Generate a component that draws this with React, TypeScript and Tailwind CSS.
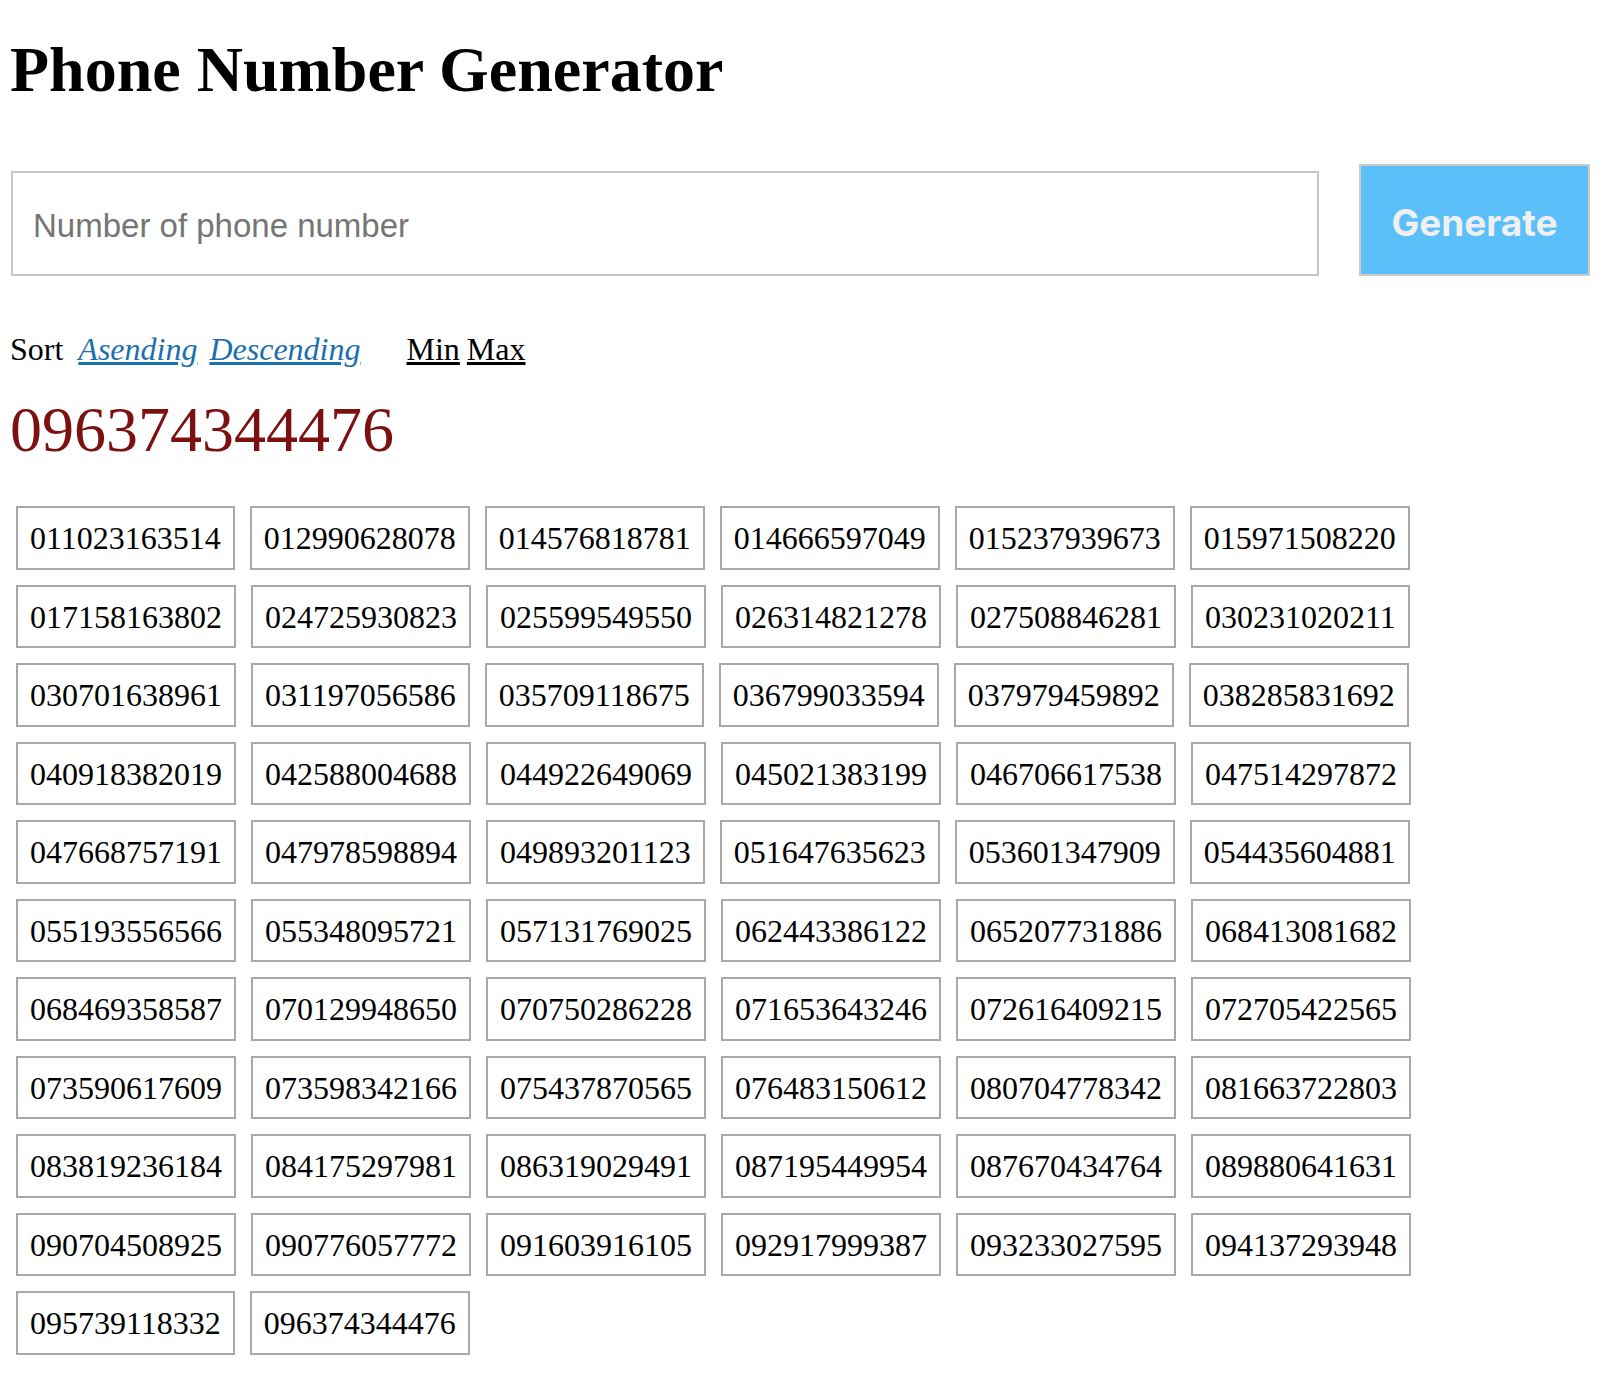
import { useState } from "react";

const NUMBERS = [
  "011023163514", "012990628078", "014576818781", "014666597049", "015237939673", "015971508220",
  "017158163802", "024725930823", "025599549550", "026314821278", "027508846281", "030231020211",
  "030701638961", "031197056586", "035709118675", "036799033594", "037979459892", "038285831692",
  "040918382019", "042588004688", "044922649069", "045021383199", "046706617538", "047514297872",
  "047668757191", "047978598894", "049893201123", "051647635623", "053601347909", "054435604881",
  "055193556566", "055348095721", "057131769025", "062443386122", "065207731886", "068413081682",
  "068469358587", "070129948650", "070750286228", "071653643246", "072616409215", "072705422565",
  "073590617609", "073598342166", "075437870565", "076483150612", "080704778342", "081663722803",
  "083819236184", "084175297981", "086319029491", "087195449954", "087670434764", "089880641631",
  "090704508925", "090776057772", "091603916105", "092917999387", "093233027595", "094137293948",
  "095739118332", "096374344476",
];

export default function App() {
  const [count, setCount] = useState("");
  const [numbers, setNumbers] = useState(NUMBERS);
  const [picked, setPicked] = useState("096374344476");

  const sortAsc = () => setNumbers((n) => [...n].sort());
  const sortDesc = () => setNumbers((n) => [...n].sort().reverse());
  const showMin = () => setPicked([...numbers].sort()[0]);
  const showMax = () => setPicked([...numbers].sort().reverse()[0]);

  return (
    <div className="min-h-screen bg-white pl-[10px] pr-[28px] pb-10 text-[32px] text-black font-['Liberation_Serif','Times_New_Roman',serif]">
      <h1 className="pt-[33px] text-[64px] leading-[74px] font-bold">Phone Number Generator</h1>

      {/* Input + button */}
      <div className="mt-[57px] flex items-end gap-[40px]">
        <input
          value={count}
          onChange={(e) => setCount(e.target.value)}
          placeholder="Number of phone number"
          className="ml-[1px] h-[105px] flex-1 border-2 border-[#c6c6c6] bg-white px-5 pt-[5px] text-[33px] text-black outline-none placeholder:text-[#757575] font-['Liberation_Sans',Arial,sans-serif]"
        />
        <button className="h-[112px] w-[231px] border-2 border-[#cbcbcb] bg-[#5bbff9] pt-[5px] text-[37px] font-bold text-[#f0f0f0] font-['Inter','Liberation_Sans',sans-serif]">
          Generate
        </button>
      </div>

      {/* Sort links */}
      <div className="mt-[55px] flex items-baseline leading-[37px]">
        <span>Sort</span>
        <a href="#" onClick={(e) => { e.preventDefault(); sortAsc(); }} className="ml-[15px] italic text-[#1b6fad] underline">
          Asending
        </a>
        <a href="#" onClick={(e) => { e.preventDefault(); sortDesc(); }} className="ml-[12px] italic text-[#1b6fad] underline">
          Descending
        </a>
        <a href="#" onClick={(e) => { e.preventDefault(); showMin(); }} className="ml-[46px] text-black underline">
          Min
        </a>
        <a href="#" onClick={(e) => { e.preventDefault(); showMax(); }} className="ml-[7px] text-black underline">
          Max
        </a>
      </div>

      <div className="mt-[25px] text-[64px] leading-[74px] text-[#7d1111]">{picked}</div>

      {/* Number grid */}
      <div className="ml-[6px] mt-[39px] flex flex-wrap gap-x-[15px] gap-y-[15px]">
        {numbers.map((n) => (
          <div key={n} className="border-2 border-[#a9a9a9] px-3 pt-[13px] pb-[11px] leading-[35.5px]">
            {n}
          </div>
        ))}
      </div>
    </div>
  );
}
